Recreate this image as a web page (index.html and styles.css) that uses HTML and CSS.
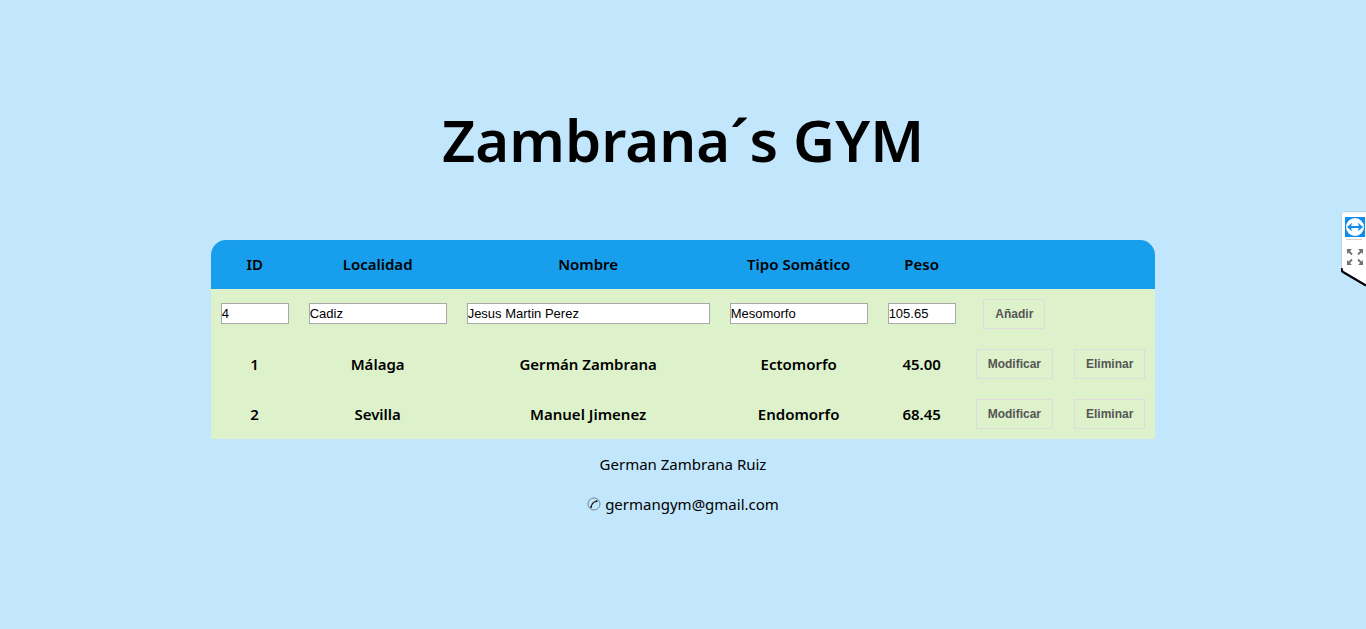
FILE: index.html
```html
<!DOCTYPE html>
<html lang="es">
<head>
<meta charset="utf-8">
<title>Zambrana´s GYM</title>
<link rel="stylesheet" href="styles.css">
</head>
<body>
<header class="page-header">
  <h1 class="title">Zambrana´s GYM</h1>
</header>
<main>
  <form class="members-form">
    <table class="members">
      <thead>
        <tr>
          <th scope="col">ID</th>
          <th scope="col">Localidad</th>
          <th scope="col">Nombre</th>
          <th scope="col">Tipo Somático</th>
          <th scope="col">Peso</th>
          <td></td>
          <td></td>
        </tr>
      </thead>
      <tbody>
        <tr>
          <td><input class="field field-short" type="text" aria-label="ID" value="4"></td>
          <td><input class="field field-medium" type="text" aria-label="Localidad" value="Cadiz"></td>
          <td><input class="field field-long" type="text" aria-label="Nombre" value="Jesus Martin Perez"></td>
          <td><input class="field field-medium" type="text" aria-label="Tipo Somático" value="Mesomorfo"></td>
          <td><input class="field field-short" type="text" aria-label="Peso" value="105.65"></td>
          <td><button class="action" type="button">Añadir</button></td>
          <td></td>
        </tr>
        <tr>
          <td>1</td>
          <td>Málaga</td>
          <td>Germán Zambrana</td>
          <td>Ectomorfo</td>
          <td>45.00</td>
          <td><button class="action" type="button">Modificar</button></td>
          <td><button class="action" type="button">Eliminar</button></td>
        </tr>
        <tr>
          <td>2</td>
          <td>Sevilla</td>
          <td>Manuel Jimenez</td>
          <td>Endomorfo</td>
          <td>68.45</td>
          <td><button class="action" type="button">Modificar</button></td>
          <td><button class="action" type="button">Eliminar</button></td>
        </tr>
      </tbody>
    </table>
  </form>
</main>
<footer class="page-footer">
  <p>German Zambrana Ruiz</p>
  <p class="contact">
    <svg class="phone" viewBox="0 0 14 14" aria-hidden="true">
      <circle cx="7" cy="7" r="6" fill="none" stroke="#6b7b84" stroke-width="0.9"/>
      <path d="M4.2 10.2C4.4 7.4 6.6 4.8 9.8 4.1" fill="none" stroke="#222" stroke-width="1.2"/>
      <path d="M3.4 9.1l1.7.4-.5 1.7-1.4-.6zM8.700 3.200l1.800.2.2 1.400-1.600.5z" fill="#111"/>
    </svg>
    <span>germangym@gmail.com</span>
  </p>
</footer>
<aside class="side-panel" aria-label="TeamViewer">
  <svg class="side-art" viewBox="0 0 25 77" aria-hidden="true">
    <path d="M25 1H5Q1 1 1 4V60L25 74Z" fill="#fff"/>
    <path d="M3 .8H25" stroke="#9fb3c0" stroke-width=".5"/>
    <path d="M.5 3V57" stroke="#b7cad6" stroke-width=".6"/>
    <path d="M.6 57Q.4 60 2 61L25 74.500" fill="none" stroke="#000" stroke-width="2.200"/>
    <rect x="4" y="6" width="20" height="20" fill="#0d8dee"/>
    <circle cx="14" cy="16" r="9" fill="#fff"/>
    <path d="M6 16l5-4.200-.8 3.200h7.600l-.8-3.200 5 4.200-5 4.200.8-3.200h-7.600l.8 3.200z" fill="#0d8dee"/>
    <path d="M5 28.500H21" stroke="#d5d5d5"/>
    <g fill="#727272">
      <path d="M7 39.500l4 4M21 39.500l-4 4M7 52.500l4-4M21 52.500l-4-4" fill="none" stroke="#727272" stroke-width="1.800"/>
      <path d="M6 38h5l-5 5zM22 38h-5l5 5zM6 54h5l-5-5zM22 54h-5l5-5z"/>
    </g>
  </svg>
</aside>
</body>
</html>
```
FILE: styles.css
```css
* {
  box-sizing: border-box;
}

body {
  margin: 0;
  background: #c2e6fc;
  color: #000;
  font: 15px/20px "Trebuchet MS", "Noto Sans", "Open Sans", sans-serif;
}

.page-header {
  padding: 100px 20px 60px;
  text-align: center;
}

.title {
  margin: 0;
  font-size: 58px;
  line-height: 80px;
  font-weight: 600;
}

.members {
  margin: 0 auto;
  border-spacing: 0;
  background: #ddf2ca;
  border-radius: 15px 15px 0 0;
  overflow: hidden;
  font-size: 15px;
  font-weight: 600;
  text-align: center;
}

.members th,
.members td {
  height: 50px;
  padding: 0 10px;
  font-weight: 600;
}

.members td:last-child {
  padding-left: 11px;
}

.members thead th,
.members thead td {
  height: 49px;
  padding-bottom: 2px;
  background: #179eed;
}

.field {
  display: block;
  height: 21px;
  margin-bottom: 2px;
  padding: 1px 0;
  border: 1px solid #a9a9a9;
  border-radius: 0;
  background: #fff;
  color: #000;
  font: 13px "Liberation Sans", Arial, sans-serif;
}

.field-short {
  width: 68px;
}

.field-medium {
  width: 138px;
}

.field-long {
  width: 243px;
}

.action {
  height: 30px;
  padding: 0 11px;
  border: 1px solid #dcdcdc;
  background: transparent;
  color: #555;
  font: bold 12px "Liberation Sans", Arial, sans-serif;
}

.page-footer {
  padding-top: 15px;
  text-align: center;
}

.page-footer p {
  margin: 0 0 20px;
}

.contact {
  display: flex;
  justify-content: center;
  align-items: center;
  gap: 4px;
}

.phone {
  width: 14px;
  height: 14px;
}

.side-panel {
  position: fixed;
  top: 211px;
  right: 0;
}

.side-art {
  display: block;
  width: 25px;
  height: 77px;
}
```
